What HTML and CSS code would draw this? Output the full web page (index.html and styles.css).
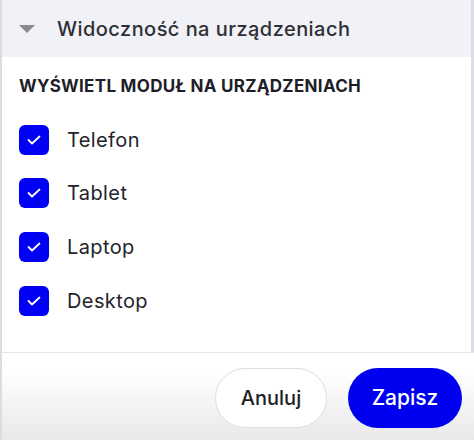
FILE: index.html
```html
<!DOCTYPE html>
<html lang="pl">
<head>
<meta charset="utf-8">
<link rel="stylesheet" href="styles.css">
</head>
<body>
<div class="panel">
  <div class="main">
    <div class="header">
      <svg class="caret" width="16" height="8" viewBox="0 0 16 8"><path d="M0 0 H16 L8 8 Z" fill="#8a8a90"/></svg>
      <span class="title">Widoczność na urządzeniach</span>
    </div>
    <div class="body">
      <div class="section-title">WYŚWIETL MODUŁ NA URZĄDZENIACH</div>
      <ul class="options">
        <li class="option"><span class="check"><svg width="14" height="10" viewBox="0 0 14 10"><path d="M1.5 5 L5 8.5 L12.5 1.5" fill="none" stroke="#fff" stroke-width="1.8" stroke-linecap="round" stroke-linejoin="round"/></svg></span><span class="label">Telefon</span></li>
        <li class="option"><span class="check"><svg width="14" height="10" viewBox="0 0 14 10"><path d="M1.5 5 L5 8.5 L12.5 1.5" fill="none" stroke="#fff" stroke-width="1.8" stroke-linecap="round" stroke-linejoin="round"/></svg></span><span class="label">Tablet</span></li>
        <li class="option"><span class="check"><svg width="14" height="10" viewBox="0 0 14 10"><path d="M1.5 5 L5 8.5 L12.5 1.5" fill="none" stroke="#fff" stroke-width="1.8" stroke-linecap="round" stroke-linejoin="round"/></svg></span><span class="label">Laptop</span></li>
        <li class="option"><span class="check"><svg width="14" height="10" viewBox="0 0 14 10"><path d="M1.5 5 L5 8.5 L12.5 1.5" fill="none" stroke="#fff" stroke-width="1.8" stroke-linecap="round" stroke-linejoin="round"/></svg></span><span class="label">Desktop</span></li>
      </ul>
    </div>
  </div>
  <div class="footer">
    <button class="btn btn-cancel">Anuluj</button>
    <button class="btn btn-save">Zapisz</button>
  </div>
</div>
</body>
</html>
```

FILE: styles.css
```css
html, body {
  margin: 0;
  padding: 0;
  background: #ffffff;
}
body {
  font-family: Inter, "Noto Sans", sans-serif;
  color: #23232b;
}
.panel {
  width: 474px;
  height: 440px;
  display: flex;
  flex-direction: column;
  box-sizing: border-box;
  border-left: 2px solid #dcdce4;
}
.main {
  flex: 1;
  display: flex;
  flex-direction: column;
  border-right: 3px solid #dcdce4;
}
.header {
  height: 57px;
  background: #f1f2f7;
  display: flex;
  align-items: center;
  padding-left: 17px;
  gap: 22px;
}
.caret {
  display: block;
  margin-top: 1px;
}
.title {
  font-size: 20px;
  font-weight: 500;
  color: #2f2f35;
  letter-spacing: 0.45px;
}
.body {
  flex: 1;
  padding: 17px 0 0 17px;
}
.section-title {
  font-size: 17px;
  font-weight: 700;
  letter-spacing: 0.3px;
  color: #1e1e28;
  line-height: 24px;
}
.options {
  list-style: none;
  margin: 26.5px 0 0 0;
  padding: 0;
  display: flex;
  flex-direction: column;
  gap: 23.7px;
}
.option {
  display: flex;
  align-items: center;
  gap: 18px;
  height: 30px;
}
.check {
  width: 30px;
  height: 30px;
  border-radius: 6px;
  background: #0000f5;
  display: flex;
  align-items: center;
  justify-content: center;
}
.check svg {
  display: block;
}
.label {
  font-size: 20px;
  letter-spacing: 0.4px;
  color: #23232b;
}
.footer {
  height: 88px;
  flex: none;
  box-sizing: border-box;
  border-top: 1px solid #e4e4ea;
  background: linear-gradient(#ffffff 20%, #e9e9e9 100%);
  display: flex;
  align-items: center;
  justify-content: flex-end;
  gap: 21px;
  padding: 2px 12px 0 0;
}
.btn {
  height: 60px;
  border-radius: 30px;
  font-family: inherit;
  font-size: 20px;
  font-weight: 500;
  padding: 0 20px;
  cursor: pointer;
}
.btn-cancel {
  background: #ffffff;
  border: 1px solid #dedee3;
  color: #1e1e26;
  width: 112px;
}
.btn-save {
  background: #0000f0;
  border: none;
  color: #ffffff;
  width: 114px;
  font-size: 21px;
}
```
